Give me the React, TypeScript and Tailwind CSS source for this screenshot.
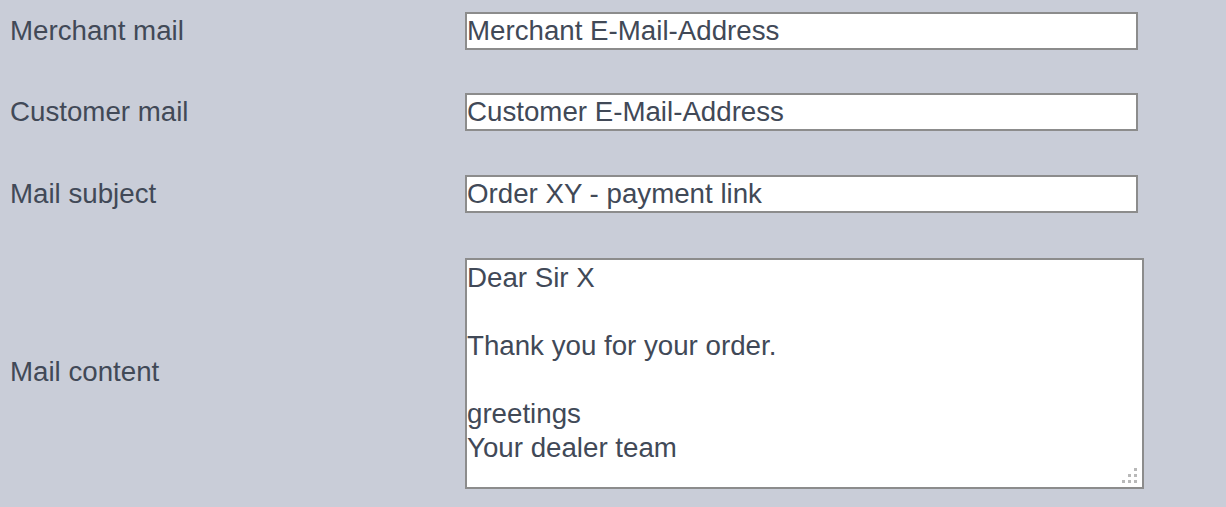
import React from "react";

const font = { fontFamily: '"Liberation Sans", Arial, sans-serif' };

function Grip() {
  const dots: [number, number][] = [
    [12, 0],
    [6, 6],
    [12, 6],
    [0, 12],
    [6, 12],
    [12, 12],
  ];
  return (
    <svg className="absolute right-[7px] bottom-[6px] pointer-events-none" width="15" height="15" viewBox="0 0 15 15">
      {dots.map(([x, y], i) => (
        <rect key={i} x={x} y={y} width="3" height="3" fill="#b9b9b9" />
      ))}
    </svg>
  );
}

export default function App() {
  const inputCls =
    "w-[673px] h-[38px] bg-white border-2 border-[#8c8c8c] px-[0px] text-[27.7px] text-[#414957] outline-none leading-none";
  return (
    <div className="w-[1226px] h-[507px] bg-[#c9cdd8] text-[#414957] overflow-hidden" style={font}>
      <div className="flex flex-col pt-[12px]">
        <div className="flex items-center h-[38px]">
          <div className="w-[465px] pl-[10px] text-[27.7px]">Merchant mail</div>
          <input className={inputCls} style={font} defaultValue="Merchant E-Mail-Address" />
        </div>
        <div className="flex items-center h-[38px] mt-[43px]">
          <div className="w-[465px] pl-[10px] text-[27.7px]">Customer mail</div>
          <input className={inputCls} style={font} defaultValue="Customer E-Mail-Address" />
        </div>
        <div className="flex items-center h-[38px] mt-[44px]">
          <div className="w-[465px] pl-[10px] text-[27.7px]">Mail subject</div>
          <input className={inputCls} style={font} defaultValue="Order XY - payment link" />
        </div>
        <div className="flex items-center h-[231px] mt-[45px]">
          <div className="w-[465px] pl-[10px] text-[27.7px] -mt-[3px]">Mail content</div>
          <div className="relative w-[679px] h-[231px]">
            <textarea
              className="block w-[679px] h-[231px] resize-none bg-white border-2 border-[#8c8c8c] px-0 pt-[1px] text-[27.7px] leading-[34px] text-[#414957] outline-none"
              style={font}
              defaultValue={"Dear Sir X\n\nThank you for your order.\n\ngreetings\nYour dealer team"}
            />
            <Grip />
          </div>
        </div>
      </div>
    </div>
  );
}
